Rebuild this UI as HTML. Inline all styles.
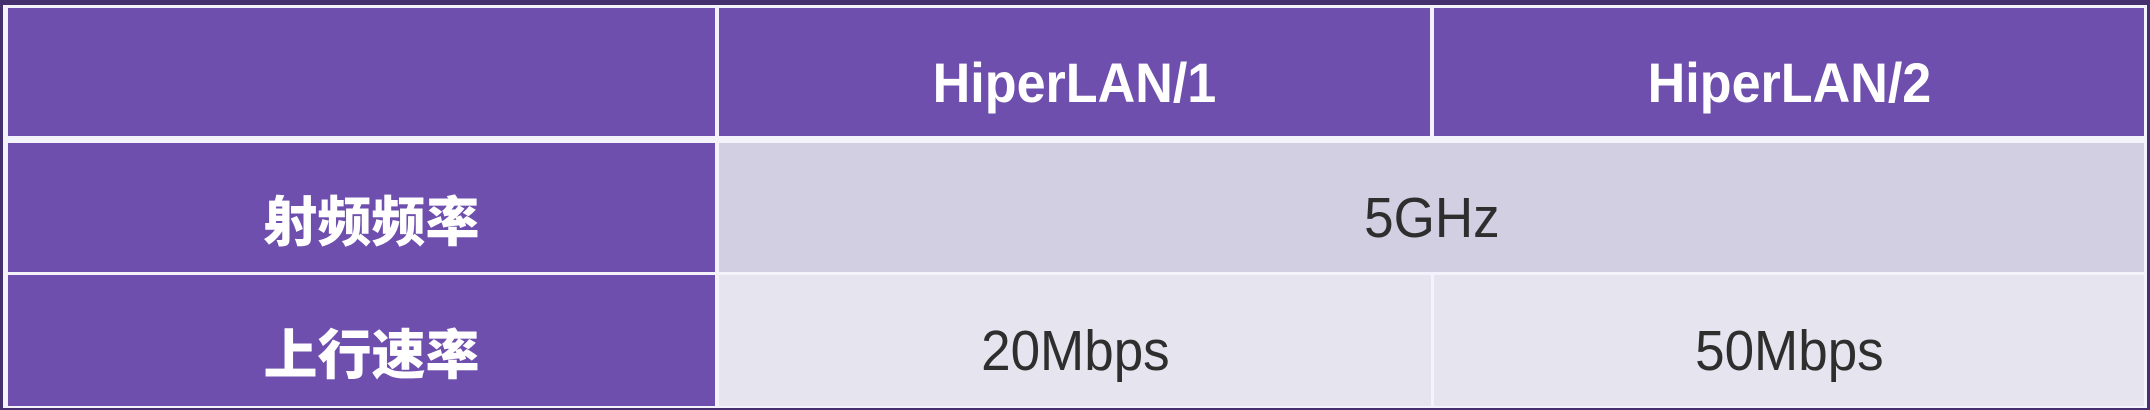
<!DOCTYPE html>
<html><head><meta charset="utf-8"><style>
html,body{margin:0;padding:0;width:2150px;height:410px;overflow:hidden;background:#44306e;}
.c{position:absolute;box-sizing:border-box;display:flex;align-items:center;justify-content:center;padding-top:20px;}
.c span{display:inline-block;transform:scaleX(0.93);}
.h{background:#6f4fad;color:#fff;font-family:"Liberation Sans",sans-serif;font-weight:bold;font-size:56px;}
.l{background:#6f4fad;color:#fff;font-family:"Liberation Sans","Noto Sans CJK SC",sans-serif;font-weight:900;font-size:54px;}
.b{color:#2e2e2e;font-family:"Liberation Sans",sans-serif;font-size:57px;}
</style></head><body>
<div style="position:absolute;left:3px;top:5px;width:2144px;height:403px;background:#f4f2fa;"></div>
<div class="c h" style="left:8px;top:8px;width:707px;height:128px"></div>
<div class="c h" style="left:719px;top:8px;width:711px;height:128px"><span>HiperLAN/1</span></div>
<div class="c h" style="left:1434px;top:8px;width:710px;height:128px"><span>HiperLAN/2</span></div>
<div class="c l" style="left:8px;top:143px;width:707px;height:129px;padding-left:20px">射频频率</div>
<div class="c b" style="left:719px;top:143px;width:1425px;height:129px;background:#d2cfe2"><span>5GHz</span></div>
<div class="c l" style="left:8px;top:275px;width:707px;height:131px;padding-left:20px">上行速率</div>
<div class="c b" style="left:719px;top:275px;width:712px;height:131px;background:#e6e5ef"><span>20Mbps</span></div>
<div class="c b" style="left:1434px;top:275px;width:710px;height:131px;background:#e6e5ef"><span>50Mbps</span></div>
</body></html>
